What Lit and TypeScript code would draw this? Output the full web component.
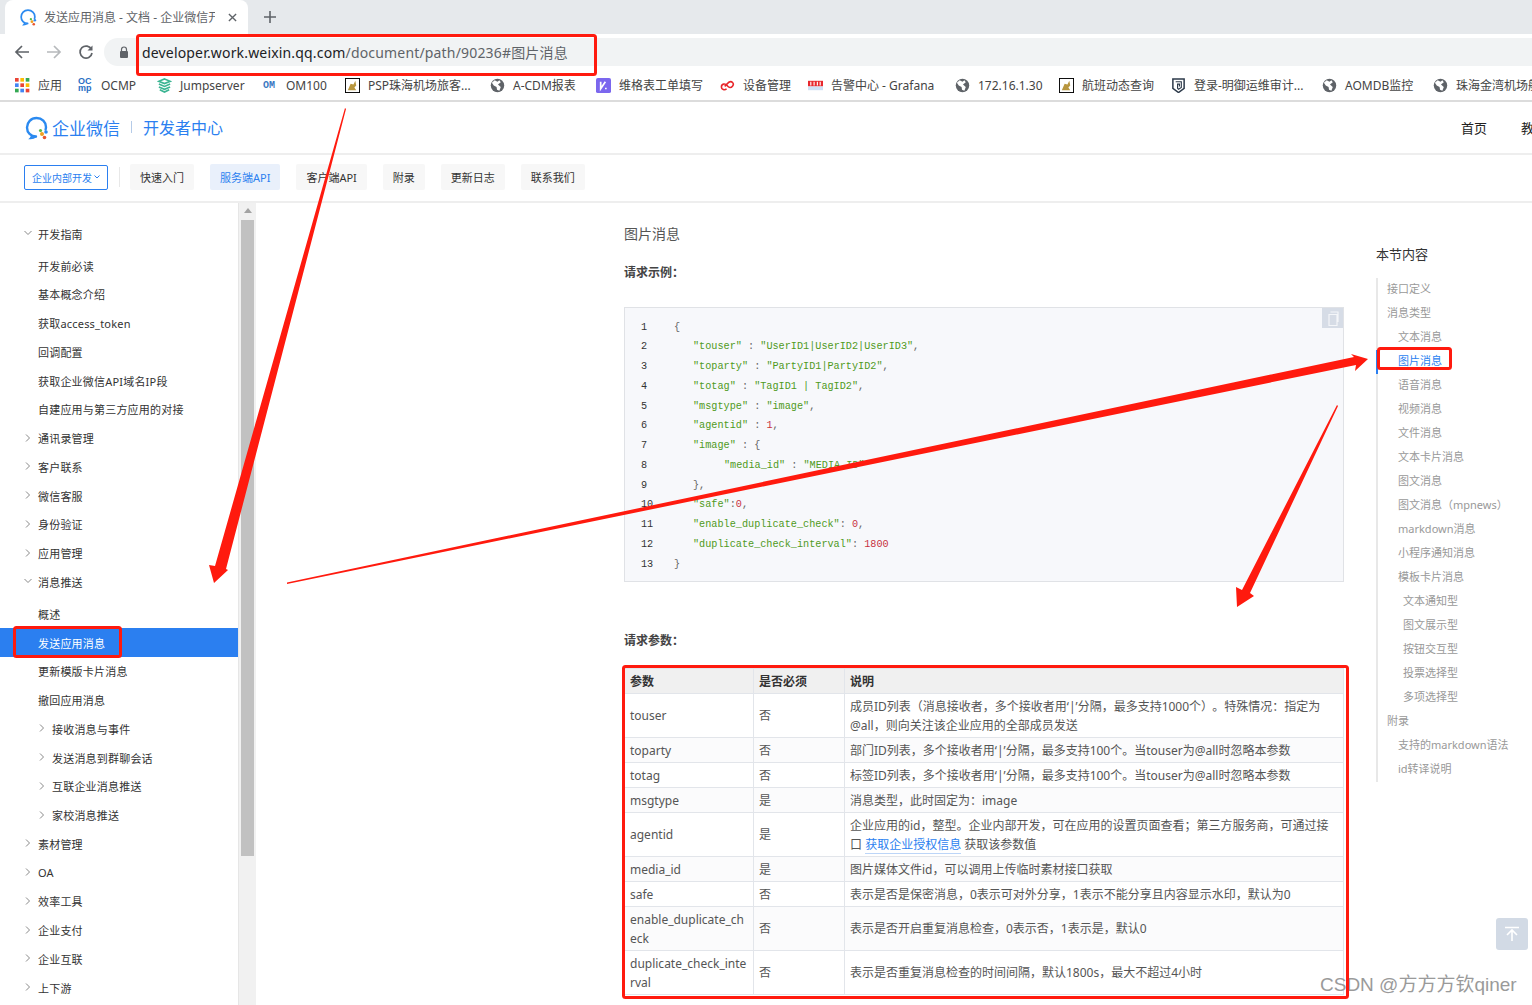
import { LitElement, html, css, svg } from 'lit';
import { customElement } from 'lit/decorators.js';

const logo = svg`
  <path d="M12 21.5c-5.2 0-9-3.8-9-9s4-9.5 9.500-9.5 9.500 4 9.500 9c0 1-.2 1.8-.4 2.5" fill="none" stroke="#2b8af0" stroke-width="2.4" stroke-linecap="round"/>
  <path d="M12 21.500c-1.500 1-3.500 1.700-5.500 1.800 .8-.8 1.200-1.800 1.200-3" fill="none" stroke="#2b8af0" stroke-width="1.800"/>
  <circle cx="18" cy="19" r="2" fill="#f0a020"/>
  <circle cx="22" cy="17" r="1.800" fill="#2b8af0"/>
  <circle cx="20.500" cy="22.500" r="1.800" fill="#e8552f"/>
  <circle cx="16.500" cy="15.500" r="1.600" fill="#58b947"/>
`;

const globe = html`<svg class="ico" viewBox="0 0 16 16">
  <circle cx="8" cy="8" r="7.200" fill="#5f6368"/>
  <path d="M5 2.500l3 1.500 2-1.500 1.500 2-3 2.500 3 2.500-1.500 4-2.500-1-.5-3-3-1.500-2-3z" fill="#fff"/>
</svg>`;

const frameIcon = html`<svg class="ico" viewBox="0 0 16 16">
  <rect x=".5" y=".5" width="15" height="15" fill="#fff" stroke="#000"/>
  <path d="M3 13l3-7 3 1 2-4 1 5-2 2 2 3z" fill="#b8963e"/>
</svg>`;

const appColors = ['#ea4335', '#fbbc05', '#34a853', '#4285f4', '#ea4335', '#fbbc05', '#34a853', '#4285f4', '#ea4335'];

// w is the pitch from this bookmark's icon to the next one's
const bookmarks = [
  { w: 63, label: '应用', icon: html`<svg class="ico" viewBox="0 0 14 14">
      ${[0, 5, 10].map((y, r) => [0, 5, 10].map((x, c) => svg`<rect x=${x} y=${y} width="3.4" height="3.4" fill=${appColors[r * 3 + c]}/>`))}
    </svg>` },
  { w: 79, label: 'OCMP', icon: html`<span class="ocmp"><span>OC</span><span>mp</span></span>` },
  { w: 106, label: 'Jumpserver', icon: html`<svg class="ico" viewBox="0 0 16 16">
      <path d="M8 1l6 2.500L8 6 2 3.500zM2 6.500L8 9l6-2.500M2 9.500L8 12l6-2.500M3 12.500L8 15l5-2.500" fill="none" stroke="#3cb593" stroke-width="1.800"/>
    </svg>` },
  { w: 82, label: 'OM100', icon: html`<span class="om">OM</span>` },
  { w: 145, label: 'PSP珠海机场旅客...', icon: frameIcon },
  { w: 106, label: 'A-CDM报表', icon: globe },
  { w: 124, label: '维格表工单填写', icon: html`<svg class="ico" viewBox="0 0 16 16">
      <rect width="16" height="16" rx="2" fill="#7b67ee"/>
      <path d="M5 4v7.500l5-7.500M10.500 10.500v1.500" fill="none" stroke="#fff" stroke-width="1.800"/>
    </svg>` },
  { w: 88, label: '设备管理', icon: html`<svg class="ico" viewBox="0 0 16 16">
      <path d="M7 11.500c-2 2-5.500 1-5.500-2 0-3.500 4-4 6-1.500s4 3 6 .5-1-6-4-4L5 9" fill="none" stroke="#e8262a" stroke-width="1.700"/>
    </svg>` },
  { w: 147, label: '告警中心 - Grafana', icon: html`<svg class="ico" viewBox="0 0 16 16">
      <rect y="3" width="16" height="6" fill="#e8282e"/>
      <path d="M3 4v4M6.500 4v4M10 4v4M13 4v4" stroke="#fff" stroke-width="1.200"/>
      <rect y="9" width="16" height="4" fill="#cfe0f5"/>
    </svg>` },
  { w: 104, label: '172.16.1.30', icon: globe },
  { w: 112, label: '航班动态查询', icon: frameIcon },
  { w: 151, label: '登录-明御运维审计...', icon: html`<svg class="ico" viewBox="0 0 16 16">
      <path d="M2 1h12v10l-6 4.500L2 11z" fill="#fff" stroke="#2d3a4a" stroke-width="1.600"/>
      <path d="M5 4h6v6l-3 2-1-1V6.500h2V9" fill="none" stroke="#2d3a4a" stroke-width="1.200"/>
    </svg>` },
  { w: 111, label: 'AOMDB监控', icon: globe },
  { w: 140, label: '珠海金湾机场航班', icon: globe },
];

type NavItem = { t: string; lvl?: number; arrow?: 'right' | 'down'; active?: boolean; gap?: boolean };

const sideItems: NavItem[] = [
  { t: '开发指南', arrow: 'down' },
  { t: '开发前必读', gap: true },
  { t: '基本概念介绍' },
  { t: '获取access_token' },
  { t: '回调配置' },
  { t: '获取企业微信API域名IP段' },
  { t: '自建应用与第三方应用的对接' },
  { t: '通讯录管理', arrow: 'right' },
  { t: '客户联系', arrow: 'right' },
  { t: '微信客服', arrow: 'right' },
  { t: '身份验证', arrow: 'right' },
  { t: '应用管理', arrow: 'right' },
  { t: '消息推送', arrow: 'down' },
  { t: '概述', gap: true },
  { t: '发送应用消息', active: true },
  { t: '更新模版卡片消息' },
  { t: '撤回应用消息' },
  { t: '接收消息与事件', lvl: 1, arrow: 'right' },
  { t: '发送消息到群聊会话', lvl: 1, arrow: 'right' },
  { t: '互联企业消息推送', lvl: 1, arrow: 'right' },
  { t: '家校消息推送', lvl: 1, arrow: 'right' },
  { t: '素材管理', arrow: 'right' },
  { t: 'OA', arrow: 'right' },
  { t: '效率工具', arrow: 'right' },
  { t: '企业支付', arrow: 'right' },
  { t: '企业互联', arrow: 'right' },
  { t: '上下游', arrow: 'right' },
];

const tocItems: [string, number][] = [
  ['接口定义', 0], ['消息类型', 0], ['文本消息', 1], ['图片消息', 1], ['语音消息', 1], ['视频消息', 1],
  ['文件消息', 1], ['文本卡片消息', 1], ['图文消息', 1], ['图文消息（mpnews）', 1], ['markdown消息', 1],
  ['小程序通知消息', 1], ['模板卡片消息', 1], ['文本通知型', 2], ['图文展示型', 2], ['按钮交互型', 2],
  ['投票选择型', 2], ['多项选择型', 2], ['附录', 0], ['支持的markdown语法', 1], ['id转译说明', 1],
];

const s = (t: string) => html`<span class="str">${t}</span>`;
const n = (t: string) => html`<span class="num">${t}</span>`;

const codeLines: [number, unknown][] = [
  [0, '{'],
  [1, html`${s('"touser"')} : ${s('"UserID1|UserID2|UserID3"')},`],
  [1, html`${s('"toparty"')} : ${s('"PartyID1|PartyID2"')},`],
  [1, html`${s('"totag"')} : ${s('"TagID1 | TagID2"')},`],
  [1, html`${s('"msgtype"')} : ${s('"image"')},`],
  [1, html`${s('"agentid"')} : ${n('1')},`],
  [1, html`${s('"image"')} : {`],
  [2, html`${s('"media_id"')} : ${s('"MEDIA_ID"')}`],
  [1, '},'],
  [1, html`${s('"safe"')}:${n('0')},`],
  [1, html`${s('"enable_duplicate_check"')}: ${n('0')},`],
  [1, html`${s('"duplicate_check_interval"')}: ${n('1800')}`],
  [0, '}'],
];

const params: [string, string, unknown][] = [
  ['touser', '否', html`成员ID列表（消息接收者，多个接收者用‘|’分隔，最多支持1000个<span class="tight">） 。</span>特殊情况：指定为 @all，则向关注该企业应用的全部成员发送`],
  ['toparty', '否', '部门ID列表，多个接收者用‘|’分隔，最多支持100个。当touser为@all时忽略本参数'],
  ['totag', '否', '标签ID列表，多个接收者用‘|’分隔，最多支持100个。当touser为@all时忽略本参数'],
  ['msgtype', '是', '消息类型，此时固定为：image'],
  ['agentid', '是', html`企业应用的id，整型。企业内部开发，可在应用的设置页面查看；第三方服务商，可通过接口 <a>获取企业授权信息</a> 获取该参数值`],
  ['media_id', '是', '图片媒体文件id，可以调用上传临时素材接口获取'],
  ['safe', '否', '表示是否是保密消息，0表示可对外分享，1表示不能分享且内容显示水印，默认为0'],
  ['enable_duplicate_check', '否', '表示是否开启重复消息检查，0表示否，1表示是，默认0'],
  ['duplicate_check_interval', '否', '表示是否重复消息检查的时间间隔，默认1800s，最大不超过4小时'],
];

@customElement('app-root')
export class AppRoot extends LitElement {
  static styles = css`
    :host {
      display: block;
      position: relative;
      width: 1532px;
      height: 1005px;
      overflow: hidden;
      background: #fff;
      font-family: "Noto Sans", "Noto Sans CJK SC", sans-serif;
      font-size: 11px;
      color: #333;
    }

    .tabs {
      height: 34px;
      background: #e6e9ec;
      display: flex;
      align-items: center;
      padding-left: 5px;
    }

    .tab {
      width: 243px;
      height: 34px;
      box-sizing: border-box;
      background: #fff;
      border-radius: 8px 8px 0 0;
      display: flex;
      align-items: center;
      padding: 0 11px 0 14px;
      gap: 7px;
    }

    .tab-logo {
      width: 18px;
      height: 18px;
      flex: none;
    }

    .tab-title {
      flex: 1;
      overflow: hidden;
      white-space: nowrap;
      font-size: 12px;
      color: #5f6368;
    }

    .tab-x {
      width: 9px;
      height: 9px;
      margin-left: 6px;
      flex: none;
    }

    .new-tab {
      width: 12px;
      height: 12px;
      margin-left: 16px;
    }

    .toolbar {
      height: 36px;
      display: flex;
      align-items: center;
      padding-left: 14px;
      box-sizing: border-box;
    }

    .tool {
      width: 16px;
      height: 16px;
      margin-right: 16px;
      flex: none;
    }

    .url {
      flex: 1;
      height: 28px;
      margin-left: -6px;
      background: #f1f3f4;
      border-radius: 14px 0 0 14px;
      display: flex;
      align-items: center;
      padding-left: 38px;
      position: relative;
      font-size: 14px;
      letter-spacing: .17px;
      color: #5f6368;
      white-space: nowrap;
    }

    .url b {
      font-weight: 400;
      color: #202124;
    }

    .lock {
      position: absolute;
      left: 14px;
      top: 8px;
      width: 12px;
      height: 12px;
    }

    .bookmarks {
      height: 32px;
      box-sizing: border-box;
      display: flex;
      align-items: center;
      padding-left: 15px;
      border-bottom: 2px solid #dcdcdc;
      white-space: nowrap;
      overflow: hidden;
      font-size: 12px;
      color: #444;
      margin-bottom: 1px;
    }

    .bm {
      display: flex;
      align-items: center;
      gap: 8px;
      flex: none;
    }

    .ico {
      width: 15px;
      height: 15px;
      flex: none;
    }

    .om {
      width: 15px;
      font: 700 10px "Liberation Mono", monospace;
      color: #3b78c2;
      flex: none;
    }

    .ocmp {
      width: 15px;
      flex: none;
      display: flex;
      flex-direction: column;
      font: 700 9px/7.5px "Liberation Sans", sans-serif;
      color: #2a6fc4;
    }

    .site-head {
      height: 52px;
      box-sizing: border-box;
      border-bottom: 2px solid #eeeeee;
      display: flex;
      align-items: center;
      padding: 0 0 2px 24px;
      color: #2b7ff0;
    }

    .site-logo {
      width: 25px;
      height: 25px;
      margin-right: 3px;
    }

    .brand {
      font-size: 17px;
    }

    .sep {
      width: 1px;
      height: 12px;
      background: #b5cbe8;
      margin: 0 11px 0 11px;
    }

    .center {
      font-size: 16px;
    }

    .head-links {
      margin-left: auto;
      display: flex;
      gap: 34px;
      font-size: 13px;
      color: #222;
      margin-right: -1px;
      width: 72px;
      overflow: hidden;
      white-space: nowrap;
    }

    .subnav {
      height: 48px;
      box-sizing: border-box;
      border-bottom: 2px solid #eeeeee;
      display: flex;
      align-items: center;
      padding-left: 24px;
      gap: 16px;
      padding-bottom: 2px;
    }

    .dropdown {
      width: 84px;
      height: 25px;
      box-sizing: border-box;
      border: 1px solid #2b7ff0;
      border-radius: 2px;
      color: #2b7ff0;
      font-size: 10px;
      display: flex;
      align-items: center;
      justify-content: center;
      gap: 2px;
    }

    .dropdown svg {
      width: 6px;
      height: 4px;
    }

    .vline {
      width: 1px;
      height: 20px;
      background: #e8e8e8;
      margin: 0 -6px 0 -5px;
    }

    .pill {
      height: 26px;
      padding: 0 10px;
      background: #f7f7f7;
      border-radius: 2px;
      display: flex;
      align-items: center;
      color: #333;
    }

    .pill.on {
      background: #e9f0fb;
      color: #2b7ff0;
    }

    .body {
      display: flex;
      height: 802px;
    }

    .side {
      width: 238px;
      flex: none;
      padding-top: 16.3px;
      overflow: hidden;
      box-sizing: border-box;
      letter-spacing: .2px;
    }

    .row {
      height: 28.75px;
      display: flex;
      align-items: center;
      padding-left: 38px;
      position: relative;
      white-space: nowrap;
      color: #333;
    }

    .row.gap {
      margin-top: 3.2px;
    }

    .row.sub {
      padding-left: 52px;
    }

    .row.on {
      background: #2b7ff0;
      color: #fff;
    }

    .row svg {
      position: absolute;
      left: 24px;
      top: 10px;
      width: 8px;
      height: 8px;
    }

    .row.sub svg {
      left: 38px;
    }

    .scroll {
      width: 18px;
      flex: none;
      box-sizing: border-box;
      background: #f1f1f1;
      border-left: 1px solid #e6e6e6;
      padding: 5px 2px 0;
    }

    .scroll-up {
      width: 0;
      height: 0;
      margin: 0 auto 7px;
      border: 4px solid transparent;
      border-top: 0;
      border-bottom: 5px solid #a3a3a3;
    }

    .thumb {
      height: 636px;
      background: #c1c1c1;
    }

    .content {
      width: 720px;
      margin-left: 368px;
      flex: none;
      padding-top: 21px;
      font-size: 12px;
      color: #555;
    }

    .content h2 {
      margin: 0 0 19px;
      font-size: 14px;
      line-height: 20px;
      font-weight: 400;
      color: #555;
    }

    .content h3 {
      margin: 0;
      font-size: 12px;
      line-height: 20px;
      font-weight: 700;
      color: #444;
    }

    .code {
      position: relative;
      box-sizing: border-box;
      height: 275px;
      margin: 24px 0 49px;
      padding: 9.5px 0 0 16px;
      background: #f7f8fb;
      border: 1px solid #e0e2e6;
      font: 10.2px/19.75px "Liberation Mono", monospace;
      color: #666;
    }

    .line {
      display: flex;
      height: 19.75px;
      white-space: pre;
    }

    .ln {
      width: 33px;
      flex: none;
      color: #333;
    }

    .lv1 {
      padding-left: 19px;
    }

    .lv2 {
      padding-left: 50px;
    }

    .str {
      color: #4f9a1c;
    }

    .num {
      color: #c8323e;
    }

    .copy {
      position: absolute;
      right: 0;
      top: 0;
      width: 21px;
      height: 20px;
      background: #d6dce6;
      display: flex;
      align-items: center;
      justify-content: center;
    }

    .copy svg {
      width: 12px;
      height: 15px;
    }

    table {
      margin-top: 17px;
      width: 720px;
      table-layout: fixed;
      border-collapse: collapse;
      line-height: 19px;
    }

    th,
    td {
      border: 1px solid #e2e5ea;
      padding: 2.5px 5px;
      text-align: left;
      vertical-align: middle;
    }

    td:first-child {
      word-break: break-all;
    }

    .tight {
      word-spacing: -4px;
    }

    th {
      background: #f0f0f0;
      color: #333;
      font-weight: 700;
    }

    tr:nth-child(even) td {
      background: #fbfbfc;
    }

    td a {
      color: #2b7ff0;
      border-bottom: 1px solid #bcd5f8;
    }

    .toc {
      margin-left: 32px;
      width: 156px;
      flex: none;
      padding-top: 41px;
    }

    .toc h4 {
      margin: 0 0 14px;
      font-size: 13px;
      line-height: 20px;
      font-weight: 400;
      color: #333;
    }

    .toc-list {
      border-left: 2px solid #e8e8e8;
    }

    .toc-item {
      height: 24px;
      line-height: 22px;
      color: #999;
      white-space: nowrap;
      margin-left: -2px;
      border-left: 2px solid transparent;
      box-sizing: border-box;
    }

    .toc-item.on {
      color: #2b7ff0;
      border-left-color: #2b7ff0;
    }

    .toc-item.l0 {
      padding-left: 9px;
    }

    .toc-item.l1 {
      padding-left: 20px;
    }

    .toc-item.l2 {
      padding-left: 25px;
    }

    .back-top {
      position: absolute;
      left: 1496px;
      top: 918px;
      width: 32px;
      height: 32px;
      border-radius: 3px;
      background: #d2dae5;
      display: flex;
      align-items: center;
      justify-content: center;
    }

    .back-top svg {
      width: 16px;
      height: 16px;
    }

    .watermark {
      position: absolute;
      left: 1320px;
      top: 973px;
      font-family: "Liberation Sans", "Noto Sans CJK SC", sans-serif;
      font-size: 19px;
      line-height: 24px;
      color: #9a9a9a;
      white-space: nowrap;
    }

    .marks {
      position: absolute;
      left: 0;
      top: 0;
      width: 1532px;
      height: 1005px;
      pointer-events: none;
    }
  `;

  render() {
    return html`
      <div class="tabs">
        <div class="tab">
          <svg class="tab-logo" viewBox="0 0 25 25">${logo}</svg>
          <span class="tab-title">发送应用消息 - 文档 - 企业微信开</span>
          <svg class="tab-x" viewBox="0 0 10 10"><path d="M1 1l8 8M9 1l-8 8" stroke="#5f6368" stroke-width="1.5"/></svg>
        </div>
        <svg class="new-tab" viewBox="0 0 12 12"><path d="M6 0v12M0 6h12" stroke="#5f6368" stroke-width="1.6"/></svg>
      </div>
      <div class="toolbar">
        <svg class="tool" viewBox="0 0 16 16"><path d="M15 8H2M8 2L2 8l6 6" fill="none" stroke="#5f6368" stroke-width="1.7"/></svg>
        <svg class="tool" viewBox="0 0 16 16"><path d="M1 8h13M8 2l6 6-6 6" fill="none" stroke="#b6b9bc" stroke-width="1.7"/></svg>
        <svg class="tool" viewBox="0 0 16 16"><path d="M13.500 5.500A6 6 0 1 0 14 9" fill="none" stroke="#5f6368" stroke-width="1.7"/><path d="M14.500 1.500v5h-5z" fill="#5f6368"/></svg>
        <div class="url">
          <svg class="lock" viewBox="0 0 12 12"><path d="M3.500 5V3.500a2.500 2.500 0 0 1 5 0V5" fill="none" stroke="#5f6368" stroke-width="1.2"/><rect x="2" y="5" width="8" height="7" rx="1" fill="#5f6368"/></svg>
          <span><b>developer.work.weixin.qq.com</b>/document/path/90236#图片消息</span>
        </div>
      </div>
      <div class="bookmarks">
        ${bookmarks.map(b => html`<div class="bm" style="width:${b.w}px">${b.icon}<span>${b.label}</span></div>`)}
      </div>
      <div class="site-head">
        <svg class="site-logo" viewBox="0 0 25 25">${logo}</svg>
        <span class="brand">企业微信</span>
        <span class="sep"></span>
        <span class="center">开发者中心</span>
        <div class="head-links"><span>首页</span><span>教程</span></div>
      </div>
      <div class="subnav">
        <div class="dropdown">企业内部开发<svg viewBox="0 0 6 4"><path d="M.5.5L3 3 5.500.5" fill="none" stroke="#2b7ff0"/></svg></div>
        <span class="vline"></span>
        <span class="pill">快速入门</span>
        <span class="pill on">服务端API</span>
        <span class="pill">客户端API</span>
        <span class="pill">附录</span>
        <span class="pill">更新日志</span>
        <span class="pill">联系我们</span>
      </div>
      <div class="body">
        <nav class="side">
          ${sideItems.map(it => html`
            <div class="row ${it.lvl ? 'sub' : ''} ${it.active ? 'on' : ''} ${it.gap ? 'gap' : ''}">
              ${it.arrow === 'down' ? html`<svg viewBox="0 0 8 8"><path d="M.5 2L4 5.500 7.500 2" fill="none" stroke="#888"/></svg>` : ''}
              ${it.arrow === 'right' ? html`<svg viewBox="0 0 8 8"><path d="M2 .5L5.500 4 2 7.500" fill="none" stroke="#888"/></svg>` : ''}
              ${it.t}
            </div>`)}
        </nav>
        <div class="scroll"><div class="scroll-up"></div><div class="thumb"></div></div>
        <main class="content">
          <h2>图片消息</h2>
          <h3>请求示例：</h3>
          <div class="code">
            ${codeLines.map(([lv, c], i) => html`<div class="line"><span class="ln">${i + 1}</span><span class="lv${lv}">${c}</span></div>`)}
            <div class="copy"><svg viewBox="0 0 12 15"><path d="M2 3.500h8v11H2zM3.500 1h7.500v10" fill="none" stroke="#f4f6f9" stroke-width="1.2"/></svg></div>
          </div>
          <h3>请求参数：</h3>
          <table>
            <colgroup><col style="width:129px" /><col style="width:91px" /><col /></colgroup>
            <thead><tr><th>参数</th><th>是否必须</th><th>说明</th></tr></thead>
            <tbody>
              ${params.map(p => html`<tr><td>${p[0]}</td><td>${p[1]}</td><td>${p[2]}</td></tr>`)}
            </tbody>
          </table>
        </main>
        <aside class="toc">
          <h4>本节内容</h4>
          <div class="toc-list">
            ${tocItems.map(([t, l]) => html`<div class="toc-item l${l} ${t === '图片消息' ? 'on' : ''}">${t}</div>`)}
          </div>
        </aside>
      </div>
      <div class="back-top">
        <svg viewBox="0 0 16 16"><path d="M1 1.500h14M8 15V4M3 9l5-5 5 5" fill="none" stroke="#fff" stroke-width="1.6"/></svg>
      </div>
      <div class="watermark">CSDN @方方方钦qiner</div>
      <svg class="marks" viewBox="0 0 1532 1005">
        <g fill="none" stroke="#ff1a0e" stroke-width="3">
          <rect x="137.5" y="35.5" width="458" height="39" rx="2"/>
          <rect x="14.5" y="627.5" width="106" height="29" rx="2"/>
          <rect x="1378.5" y="348.5" width="72" height="20" rx="2"/>
          <rect x="623.5" y="666.5" width="724" height="331" rx="2"/>
        </g>
        <g fill="#ff1a0e">
          <polygon points="345,108 346,109 226,569 228,570 214,583 209,565 215,566"/>
          <polygon points="287,582.500 1354,357 1351,354 1368,359 1355,371 1356,365 287,584"/>
          <polygon points="1337,405 1338,406 1250,593 1254,596 1237,607 1236,587 1242,590"/>
        </g>
      </svg>
    `;
  }
}
